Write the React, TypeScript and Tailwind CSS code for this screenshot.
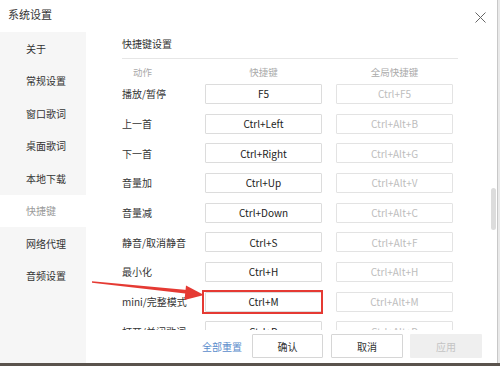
import React from 'react';

const menu = ['关于', '常规设置', '窗口歌词', '桌面歌词', '本地下载', '快捷键', '网络代理', '音频设置'];

const rows: [string, string, string][] = [
  ['播放/暂停', 'F5', 'Ctrl+F5'],
  ['上一首', 'Ctrl+Left', 'Ctrl+Alt+B'],
  ['下一首', 'Ctrl+Right', 'Ctrl+Alt+G'],
  ['音量加', 'Ctrl+Up', 'Ctrl+Alt+V'],
  ['音量减', 'Ctrl+Down', 'Ctrl+Alt+C'],
  ['静音/取消静音', 'Ctrl+S', 'Ctrl+Alt+F'],
  ['最小化', 'Ctrl+H', 'Ctrl+Alt+H'],
  ['mini/完整模式', 'Ctrl+M', 'Ctrl+Alt+M'],
  ['打开/关闭歌词', 'Ctrl+D', 'Ctrl+Alt+D'],
];

const font = { fontFamily: '"Noto Sans CJK SC", "Noto Sans", sans-serif' };

export default function App() {
  return (
    <div className="relative w-[500px] h-[366px] overflow-hidden bg-[#e9e9e9]" style={font}>
      <div className="flex flex-col w-[498px] h-[363px] bg-white border-r border-[#c8c8c8]">
        {/* title bar */}
        <div className="h-[32px] flex items-start justify-between pt-[6px] pl-[8px] pr-[11px]">
          <span className="text-[11px] leading-[16px] text-[#333]">系统设置</span>
          <svg width="11" height="11" viewBox="0 0 11 11" className="mt-[6px]">
            <path d="M0.5 0.5 L10.5 10.5 M10.5 0.5 L0.5 10.5" stroke="#666" strokeWidth="1" />
          </svg>
        </div>

        <div className="flex flex-1">
          {/* sidebar */}
          <div className="w-[86px] bg-[#f6f6f6] flex flex-col">
            {menu.map((m) => (
              <div
                key={m}
                className={
                  m === '快捷键'
                    ? 'h-[32.5px] flex items-center pl-[26px] text-[10px] text-[#9a9a9a] bg-white'
                    : 'h-[32.5px] flex items-center pl-[26px] text-[10px] text-[#333]'
                }
              >
                {m}
              </div>
            ))}
          </div>

          {/* content */}
          <div className="flex-1 flex flex-col">
            <div className="ml-[36px] w-[336px] h-[27px] pt-[4px] border-b border-[#e6e6e6] text-[10px] text-[#333]">
              快捷键设置
            </div>
            <div className="h-[271px] overflow-hidden ml-[36px]">
              <div className="flex h-[20px] items-end text-[9.5px] text-[#aaa]">
                <div className="w-[83px] pl-[11px]">动作</div>
                <div className="w-[117px] text-center">快捷键</div>
                <div className="w-[14px]" />
                <div className="w-[117px] text-center">全局快捷键</div>
              </div>
              {rows.map(([label, key, global]) => (
                <div key={label} className="flex h-[29.7px] items-center">
                  <div className="w-[83px] text-[10px] text-[#333] whitespace-nowrap">{label}</div>
                  <div className="w-[117px] h-[20px] border border-[#dcdcdc] rounded-[1px] flex items-center justify-center text-[10px] text-[#222]">
                    {key}
                  </div>
                  <div className="w-[14px]" />
                  <div className="w-[117px] h-[20px] border border-[#e3e3e3] rounded-[1px] flex items-center justify-center text-[10px] text-[#bdbdbd]">
                    {global}
                  </div>
                </div>
              ))}
            </div>

            {/* footer */}
            <div className="flex items-center h-[32px]">
              <span className="ml-[116px] w-[50px] text-[10px] text-[#5b8dcc]">全部重置</span>
              <button className="w-[71px] h-[24px] border border-[#d6d6d6] bg-white text-[10px] text-[#333] rounded-[1px]">确认</button>
              <button className="ml-[8px] w-[72px] h-[24px] border border-[#d6d6d6] bg-white text-[10px] text-[#333] rounded-[1px]">取消</button>
              <button className="ml-[7px] w-[72px] h-[24px] bg-[#efefef] text-[10px] text-[#c4c4c4] rounded-[1px]">应用</button>
            </div>
          </div>
        </div>
      </div>
      <div className="h-[3px] bg-[#5a534d]" />

      {/* scrollbar */}
      <div className="absolute left-[491px] top-[188px] w-[5px] h-[42px] rounded-full bg-[#dcdcdc]" />

      {/* annotation: red box + arrow */}
      <div className="absolute left-[202px] top-[290px] w-[121px] h-[24px] border-2 border-[#e53a33]" />
      <svg className="absolute left-0 top-0 pointer-events-none" width="500" height="366">
        <polygon points="92,281.2 190,290.2 189.5,294 92,282.8" fill="#e53a33" />
        <polygon points="186,285.5 204,295 184.5,300" fill="#e53a33" />
      </svg>
    </div>
  );
}
